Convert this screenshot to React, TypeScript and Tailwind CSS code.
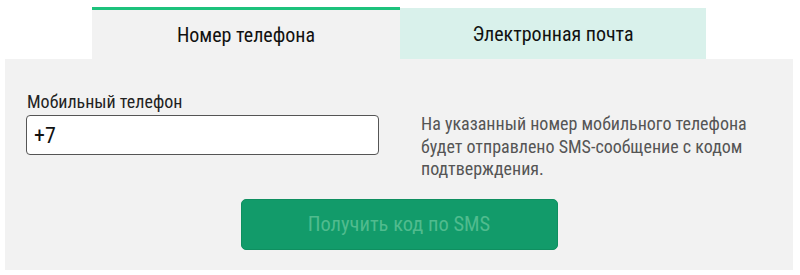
import React from "react";

export default function App() {
  return (
    <div className="w-[800px] h-[275px] bg-white font-stretch-condensed" style={{ fontFamily: "Roboto, 'Noto Sans', sans-serif" }}>
      <div className="flex pl-[92px] pt-[7px]">
        <div className="w-[308px] h-[52px] border-t-[3px] border-[#1dc27c] bg-[#f2f2f2] flex items-center justify-center text-[20px] text-[#111]">
          Номер телефона
        </div>
        <div className="w-[306px] h-[51px] mt-[1px] bg-[#d9f1eb] flex items-center justify-center text-[20px] text-[#111]">
          Электронная почта
        </div>
      </div>
      <div className="ml-[5px] w-[788px] h-[211px] bg-[#f2f2f2] flex flex-col">
        <div className="flex items-start h-[96px] pl-[21px] pt-[33px]">
          <div className="w-[353px] flex flex-col">
            <label className="text-[18px] leading-[20px] text-[#222] h-[23px] pl-[1px]">Мобильный телефон</label>
            <div className="h-[40px] border border-[#555] rounded-[4px] bg-white flex items-center pl-[7px] text-[22px] text-[#111]">
              +7
            </div>
          </div>
          <div className="ml-[42px] pt-[21px] text-[18px] leading-[22.5px] text-[#555]">
            <p>На указанный номер мобильного телефона</p>
            <p>будет отправлено SMS-сообщение с кодом</p>
            <p>подтверждения.</p>
          </div>
        </div>
        <div className="flex justify-center mt-[44px]">
          <div className="w-[317px] h-[51px] rounded-[5px] bg-[#129b6a] border border-[#0f8f60] flex items-center justify-center text-[20.5px] text-[#50bb8e]">
            Получить код по SMS
          </div>
        </div>
      </div>
    </div>
  );
}
